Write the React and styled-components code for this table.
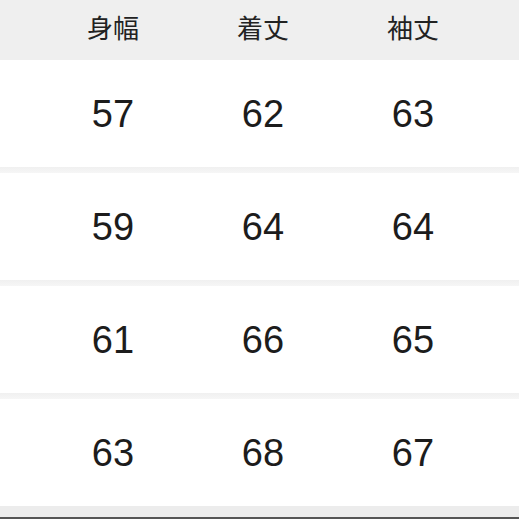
import React from 'react'
import styled, { createGlobalStyle } from 'styled-components'

const GlobalStyle = createGlobalStyle`
  html, body {
    margin: 0;
    padding: 0;
    background: #ffffff;
  }
  body {
    font-family: "Liberation Sans", "Noto Sans CJK JP", sans-serif;
  }
`

const headers = ['身幅', '着丈', '袖丈']
const rows = [
  ['57', '62', '63'],
  ['59', '64', '64'],
  ['61', '66', '65'],
  ['63', '68', '67'],
]

const Table = styled.div`
  width: 519px;
  height: 519px;
  overflow: hidden;
  display: flex;
  flex-direction: column;
`

const Row = styled.div`
  display: grid;
  grid-template-columns: repeat(3, 150px);
  padding-left: 38px;
  box-sizing: border-box;
  height: ${p => (p.$head ? 60 : 107)}px;
  padding-bottom: ${p => (p.$head ? 6 : 0)}px;
  background: ${p => (p.$head ? '#efefef' : '#ffffff')};
  align-items: center;
  flex-shrink: 0;
`

const Cell = styled.div`
  text-align: center;
  color: ${p => (p.$head ? '#222222' : '#1c1c1c')};
  font-size: ${p => (p.$head ? 26 : 38)}px;
  font-family: ${p =>
    p.$head
      ? '"Noto Sans CJK JP", "Liberation Sans", sans-serif'
      : '"Liberation Sans", Arial, sans-serif'};
  line-height: 1;
`

const Divider = styled.div`
  height: 6px;
  flex-shrink: 0;
  background: linear-gradient(#f0f0f0, #f6f6f6);
`

const Bottom = styled.div`
  height: 11px;
  flex-shrink: 0;
  background: #ececec;
  border-bottom: 2px solid #555;
`

const App = () => {
  return (
    <>
      <GlobalStyle />
      <Table>
        <Row $head>
          {headers.map(h => (
            <Cell $head key={h}>{h}</Cell>
          ))}
        </Row>
        {rows.map((r, i) => (
          <React.Fragment key={i}>
            <Row>
              {r.map((v, j) => (
                <Cell key={j}>{v}</Cell>
              ))}
            </Row>
            {i < rows.length - 1 ? <Divider /> : <Bottom />}
          </React.Fragment>
        ))}
      </Table>
    </>
  )
}

export default App
